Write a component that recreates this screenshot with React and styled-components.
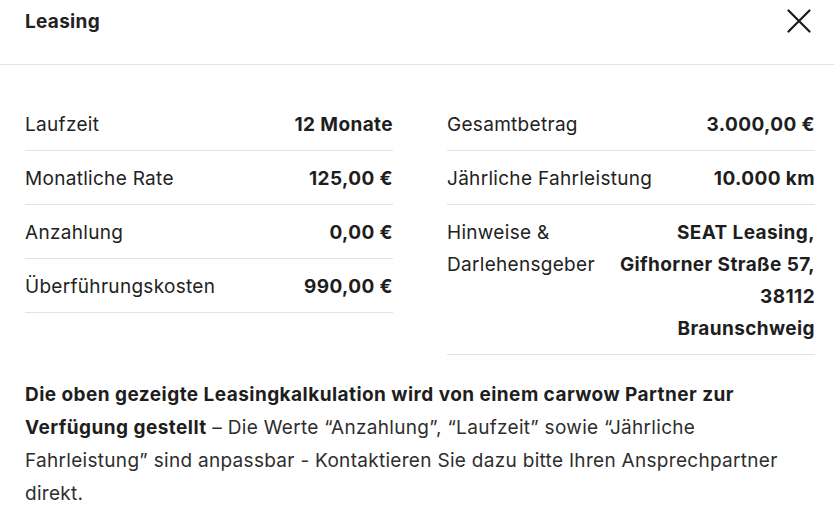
import React from "react";
import styled, { createGlobalStyle } from "styled-components";

const Global = createGlobalStyle`
  html, body { margin: 0; padding: 0; background: #fff; }
  body { font-family: Inter, "Open Sans", sans-serif; color: #222; }
`;

const Modal = styled.div`
  width: 834px;
  background: #fff;
`;

const Header = styled.div`
  display: flex;
  align-items: flex-start;
  justify-content: space-between;
  height: 65px;
  padding: 8px 22px 0 25px;
  box-sizing: border-box;
  border-bottom: 1px solid #e3e3e3;
`;

const Title = styled.h2`
  margin: 1px 0 0;
  font-weight: 700;
  font-size: 19px;
  line-height: 26px;
  letter-spacing: 0.3px;
  color: #222;
`;

const CloseButton = styled.button`
  border: 0;
  background: none;
  padding: 0;
  width: 26px;
  height: 26px;
  display: flex;
  align-items: center;
  justify-content: center;
  cursor: pointer;
`;

const Body = styled.div`
  padding: 32px 19px 0 25px;
`;

const Grid = styled.div`
  display: grid;
  grid-template-columns: 368px 368px;
  column-gap: 54px;
  align-items: start;
`;

const Column = styled.div`
  display: flex;
  flex-direction: column;
`;

const Row = styled.div`
  display: flex;
  justify-content: space-between;
  gap: 16px;
  padding: 12px 0 9px;
  border-bottom: 1px solid #e3e3e3;
  font-size: 19px;
  line-height: 32px;
`;

const Label = styled.span`
  color: #222;
  font-weight: 400;
  letter-spacing: 0.3px;
`;

const Value = styled.span`
  font-weight: 700;
  text-align: right;
  color: #1e1e1e;
  letter-spacing: 0.4px;
`;

const Line = styled.span`
  display: block;
`;

const Note = styled.p`
  margin: 23px 0 0;
  font-size: 19px;
  line-height: 33px;
  letter-spacing: 0.3px;
  color: #2e2e2e;
  max-width: 792px;
  strong { font-weight: 700; color: #1e1e1e; letter-spacing: 0.45px; }
`;

const left = [
  ["Laufzeit", ["12 Monate"]],
  ["Monatliche Rate", ["125,00 €"]],
  ["Anzahlung", ["0,00 €"]],
  ["Überführungskosten", ["990,00 €"]],
];

const right = [
  ["Gesamtbetrag", ["3.000,00 €"]],
  ["Jährliche Fahrleistung", ["10.000 km"]],
  [["Hinweise &", "Darlehensgeber"], ["SEAT Leasing,", "Gifhorner Straße 57,", "38112", "Braunschweig"]],
];

function InfoRow({ label, value }) {
  const labels = Array.isArray(label) ? label : [label];
  return (
    <Row>
      <Label>{labels.map((l) => <Line key={l}>{l}</Line>)}</Label>
      <Value>{value.map((v) => <Line key={v}>{v}</Line>)}</Value>
    </Row>
  );
}

export default function App() {
  return (
    <Modal>
      <Global />
      <Header>
        <Title>Leasing</Title>
        <CloseButton aria-label="Schließen">
          <svg width="24" height="24" viewBox="0 0 24 24">
            <path d="M1.5 1.5L22.5 22.5M22.5 1.5L1.5 22.5" stroke="#1a1a1a" strokeWidth="2.2" strokeLinecap="round" fill="none" />
          </svg>
        </CloseButton>
      </Header>
      <Body>
        <Grid>
          <Column>
            {left.map(([l, v]) => <InfoRow key={l} label={l} value={v} />)}
          </Column>
          <Column>
            {right.map(([l, v]) => <InfoRow key={String(l)} label={l} value={v} />)}
          </Column>
        </Grid>
        <Note>
          <strong>Die oben gezeigte Leasingkalkulation wird von einem carwow Partner zur Verfügung gestellt</strong> – Die Werte “Anzahlung”, “Laufzeit” sowie “Jährliche Fahrleistung” sind anpassbar - Kontaktieren Sie dazu bitte Ihren Ansprechpartner direkt.
        </Note>
      </Body>
    </Modal>
  );
}
